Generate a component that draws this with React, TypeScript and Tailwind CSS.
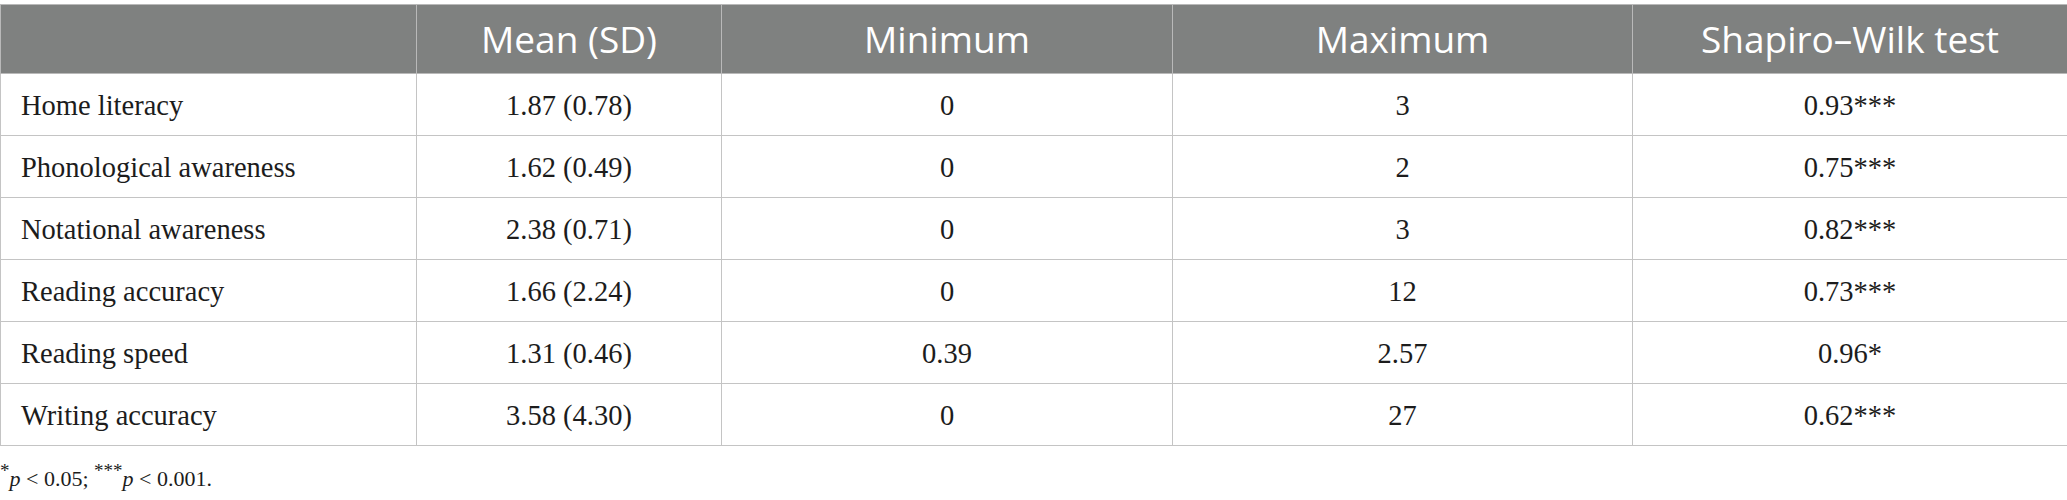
import React from "react";

const rows: [string, string, string, string, string][] = [
  ["Home literacy", "1.87 (0.78)", "0", "3", "0.93***"],
  ["Phonological awareness", "1.62 (0.49)", "0", "2", "0.75***"],
  ["Notational awareness", "2.38 (0.71)", "0", "3", "0.82***"],
  ["Reading accuracy", "1.66 (2.24)", "0", "12", "0.73***"],
  ["Reading speed", "1.31 (0.46)", "0.39", "2.57", "0.96*"],
  ["Writing accuracy", "3.58 (4.30)", "0", "27", "0.62***"],
];

const serif = { fontFamily: '"Liberation Serif", "Times New Roman", serif' };

export default function App() {
  return (
    <div className="w-[2067px] h-[500px] bg-white pt-[4px]">
      <table className="w-[2067px] border-collapse table-fixed" style={serif}>
        <colgroup>
          <col className="w-[416px]" />
          <col className="w-[305px]" />
          <col className="w-[451px]" />
          <col className="w-[460px]" />
          <col className="w-[435px]" />
        </colgroup>
        <thead>
          <tr className="h-[69px] bg-[#7f8180] text-white text-[37px] font-normal font-['Open_Sans',_'Noto_Sans',_sans-serif]">
            <th className="border border-[#b9b9b9] font-normal"></th>
            <th className="border border-[#b9b9b9] font-normal">Mean (SD)</th>
            <th className="border border-[#b9b9b9] font-normal">Minimum</th>
            <th className="border border-[#b9b9b9] font-normal">Maximum</th>
            <th className="border border-[#b9b9b9] font-normal">Shapiro–Wilk test</th>
          </tr>
        </thead>
        <tbody className="text-[28.5px] text-[#1c1c1c]">
          {rows.map((r) => (
            <tr key={r[0]} className="h-[62px]">
              <td className="border border-[#c4c4c4] pl-[20px] pt-[4px] text-left">{r[0]}</td>
              <td className="border border-[#c4c4c4] pt-[4px] text-center">{r[1]}</td>
              <td className="border border-[#c4c4c4] pt-[4px] text-center">{r[2]}</td>
              <td className="border border-[#c4c4c4] pt-[4px] text-center">{r[3]}</td>
              <td className="border border-[#c4c4c4] pt-[4px] text-center">{r[4]}</td>
            </tr>
          ))}
        </tbody>
      </table>
      <p className="mt-[17px] text-[22px] leading-[32px] text-[#1c1c1c]" style={serif}>
        <sup className="text-[19px]">*</sup>
        <i>p</i> &lt; 0.05; <sup className="text-[19px]">***</sup>
        <i>p</i> &lt; 0.001.
      </p>
    </div>
  );
}
